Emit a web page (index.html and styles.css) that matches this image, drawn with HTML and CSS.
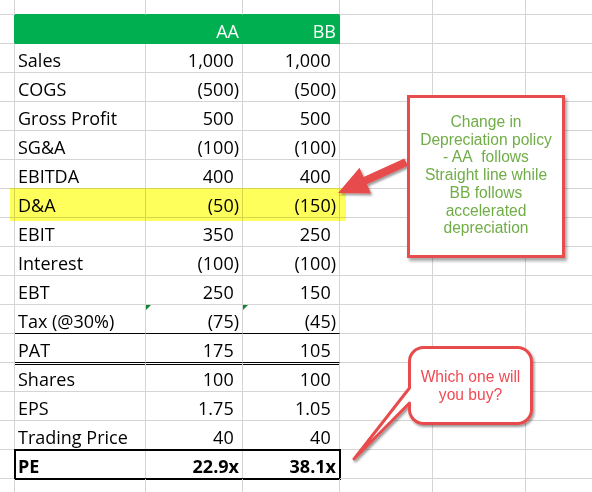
FILE: index.html
```html
<!DOCTYPE html>
<html>
<head>
<meta charset="utf-8">
<title>PE comparison</title>
<link rel="stylesheet" href="styles.css">
</head>
<body>
<div class="page">
  <div class="sheet">
    <div class="row top">
      <div class="c"></div><div class="c gb"></div><div class="c gb"></div><div class="c gb"></div><div class="c"></div><div class="c"></div><div class="c"></div>
    </div>
    <div class="row">
      <div class="c gr"></div><div class="c h"></div><div class="c h n">AA</div><div class="c h n">BB</div><div class="c"></div><div class="c"></div><div class="c"></div>
    </div>
    <div class="row">
      <div class="c"></div><div class="c">Sales</div><div class="c n p">1,000</div><div class="c n p">1,000</div><div class="c"></div><div class="c"></div><div class="c"></div>
    </div>
    <div class="row">
      <div class="c"></div><div class="c">COGS</div><div class="c n">(500)</div><div class="c n">(500)</div><div class="c"></div><div class="c"></div><div class="c"></div>
    </div>
    <div class="row">
      <div class="c"></div><div class="c">Gross Profit</div><div class="c n p">500</div><div class="c n p">500</div><div class="c"></div><div class="c"></div><div class="c"></div>
    </div>
    <div class="row">
      <div class="c"></div><div class="c">SG&amp;A</div><div class="c n">(100)</div><div class="c n">(100)</div><div class="c"></div><div class="c"></div><div class="c"></div>
    </div>
    <div class="row">
      <div class="c"></div><div class="c">EBITDA</div><div class="c n p">400</div><div class="c n p">400</div><div class="c"></div><div class="c"></div><div class="c"></div>
    </div>
    <div class="row">
      <div class="c"></div><div class="c">D&amp;A</div><div class="c n">(50)</div><div class="c n">(150)</div><div class="c"></div><div class="c"></div><div class="c"></div>
    </div>
    <div class="row">
      <div class="c"></div><div class="c">EBIT</div><div class="c n p">350</div><div class="c n p">250</div><div class="c"></div><div class="c"></div><div class="c"></div>
    </div>
    <div class="row">
      <div class="c"></div><div class="c">Interest</div><div class="c n">(100)</div><div class="c n">(100)</div><div class="c"></div><div class="c"></div><div class="c"></div>
    </div>
    <div class="row">
      <div class="c"></div><div class="c">EBT</div><div class="c n p">250</div><div class="c n p">150</div><div class="c"></div><div class="c"></div><div class="c"></div>
    </div>
    <div class="row">
      <div class="c"></div><div class="c kb">Tax (@30%)</div><div class="c n kb flag">(75)</div><div class="c n kb flag">(45)</div><div class="c"></div><div class="c"></div><div class="c"></div>
    </div>
    <div class="row">
      <div class="c"></div><div class="c kb">PAT</div><div class="c n p kb">175</div><div class="c n p kb">105</div><div class="c"></div><div class="c"></div><div class="c"></div>
    </div>
    <div class="row">
      <div class="c"></div><div class="c dbl">Shares</div><div class="c n p dbl">100</div><div class="c n p dbl">100</div><div class="c"></div><div class="c"></div><div class="c"></div>
    </div>
    <div class="row">
      <div class="c"></div><div class="c">EPS</div><div class="c n p">1.75</div><div class="c n p">1.05</div><div class="c"></div><div class="c"></div><div class="c"></div>
    </div>
    <div class="row">
      <div class="c"></div><div class="c">Trading Price</div><div class="c n p">40</div><div class="c n p">40</div><div class="c"></div><div class="c"></div><div class="c"></div>
    </div>
    <div class="row">
      <div class="c"></div>
      <div class="grp">
        <div class="c b">PE</div><div class="c n b">22.9x</div><div class="c n b">38.1x</div>
      </div>
      <div class="c"></div><div class="c"></div><div class="c"></div>
    </div>
    <div class="row">
      <div class="c"></div><div class="c"></div><div class="c"></div><div class="c"></div><div class="c"></div><div class="c"></div><div class="c"></div>
    </div>
  </div>

  <div class="hl"></div>

  <svg class="ink" width="592" height="492" viewBox="0 0 592 492">
    <defs>
      <filter id="sh" x="-20%" y="-20%" width="140%" height="140%">
        <feDropShadow dx="1.5" dy="2" stdDeviation="1.2" flood-color="#000" flood-opacity="0.4"/>
      </filter>
    </defs>
    <polygon points="338,193 371,193.5 367,184.2 408,165.8 404.3,158.4 363.6,176.9 359.5,167.8" fill="#e84c4c" filter="url(#sh)"/>
    <path d="M423.5,347.5 H517.5 A14,14 0 0 1 531.5,361.5 V409.5 A14,14 0 0 1 517.5,423.5 H423.5 A14,14 0 0 1 409.5,409.5 V403 L354,459 L409.5,388 V361.5 A14,14 0 0 1 423.5,347.5 Z" fill="#fff" stroke="#e84c4c" stroke-width="3" stroke-linejoin="round" filter="url(#sh)"/>
  </svg>

  <div class="note">Change in<br>Depreciation policy<br>- AA&nbsp; follows<br>Straight line while<br>BB follows<br>accelerated<br>depreciation</div>

  <div class="ask">Which one will<br>you buy?</div>
</div>
</body>
</html>
```

FILE: styles.css
```css
html, body {
  margin: 0;
  padding: 0;
  background: #fff;
  overflow: hidden;
}

.page {
  position: relative;
  width: 592px;
  height: 492px;
  overflow: hidden;
  font-family: "Open Sans", "Liberation Sans", sans-serif;
  font-size: 18px;
  color: #000;
}

.sheet {
  display: flex;
  flex-direction: column;
}

.row {
  display: grid;
  grid-template-columns: 15px 131px 97px 97px 93px 93px 93px;
  height: 29px;
  flex: none;
}

.row.top {
  height: 15px;
}

.c {
  box-sizing: border-box;
  border-right: 1px solid #d4d4d4;
  border-bottom: 1px solid #d4d4d4;
  display: flex;
  align-items: flex-end;
  padding: 0 3px 2px 3px;
  line-height: 20px;
  white-space: nowrap;
}

.n {
  justify-content: flex-end;
}

.p::after {
  content: ")";
  visibility: hidden;
}

.h {
  background: #00b050;
  border-color: #00b050;
  color: #fff;
}

.gr {
  border-right-color: #00b050;
}

.gb {
  border-bottom-color: #00b050;
}

.kb {
  border-bottom-color: #000;
}

.dbl {
  box-shadow: inset 0 1px 0 #fff, inset 0 2px 0 #000;
}

.b {
  font-weight: bold;
}

.grp {
  grid-column: span 3;
  display: grid;
  grid-template-columns: 131px 97px 97px;
  outline: 2px solid #000;
  outline-offset: -1px;
}

.flag {
  position: relative;
}

.flag::before {
  content: "";
  position: absolute;
  left: 0;
  top: 0;
  border-top: 5px solid #11852e;
  border-right: 5px solid transparent;
}

.hl {
  position: absolute;
  left: 10px;
  top: 188px;
  width: 336px;
  height: 33px;
  background: #ffff5c;
  mix-blend-mode: multiply;
}

.ink {
  position: absolute;
  left: 0;
  top: 0;
  pointer-events: none;
}

.note {
  position: absolute;
  left: 407px;
  top: 95px;
  width: 158px;
  height: 163px;
  box-sizing: border-box;
  border: 3px solid #e84c4c;
  background: #fff;
  box-shadow: 2px 3px 3px rgba(0, 0, 0, 0.35);
  display: flex;
  align-items: center;
  justify-content: center;
  text-align: center;
  padding-bottom: 3px;
  font-family: "Liberation Sans", Arial, sans-serif;
  font-size: 15.6px;
  line-height: 17.8px;
  color: #70ad47;
}

.ask {
  position: absolute;
  left: 408px;
  top: 346px;
  width: 125px;
  height: 79px;
  display: flex;
  align-items: center;
  justify-content: center;
  text-align: center;
  font-family: "Liberation Sans", Arial, sans-serif;
  font-size: 15.6px;
  line-height: 18px;
  color: #f04b55;
}
```
